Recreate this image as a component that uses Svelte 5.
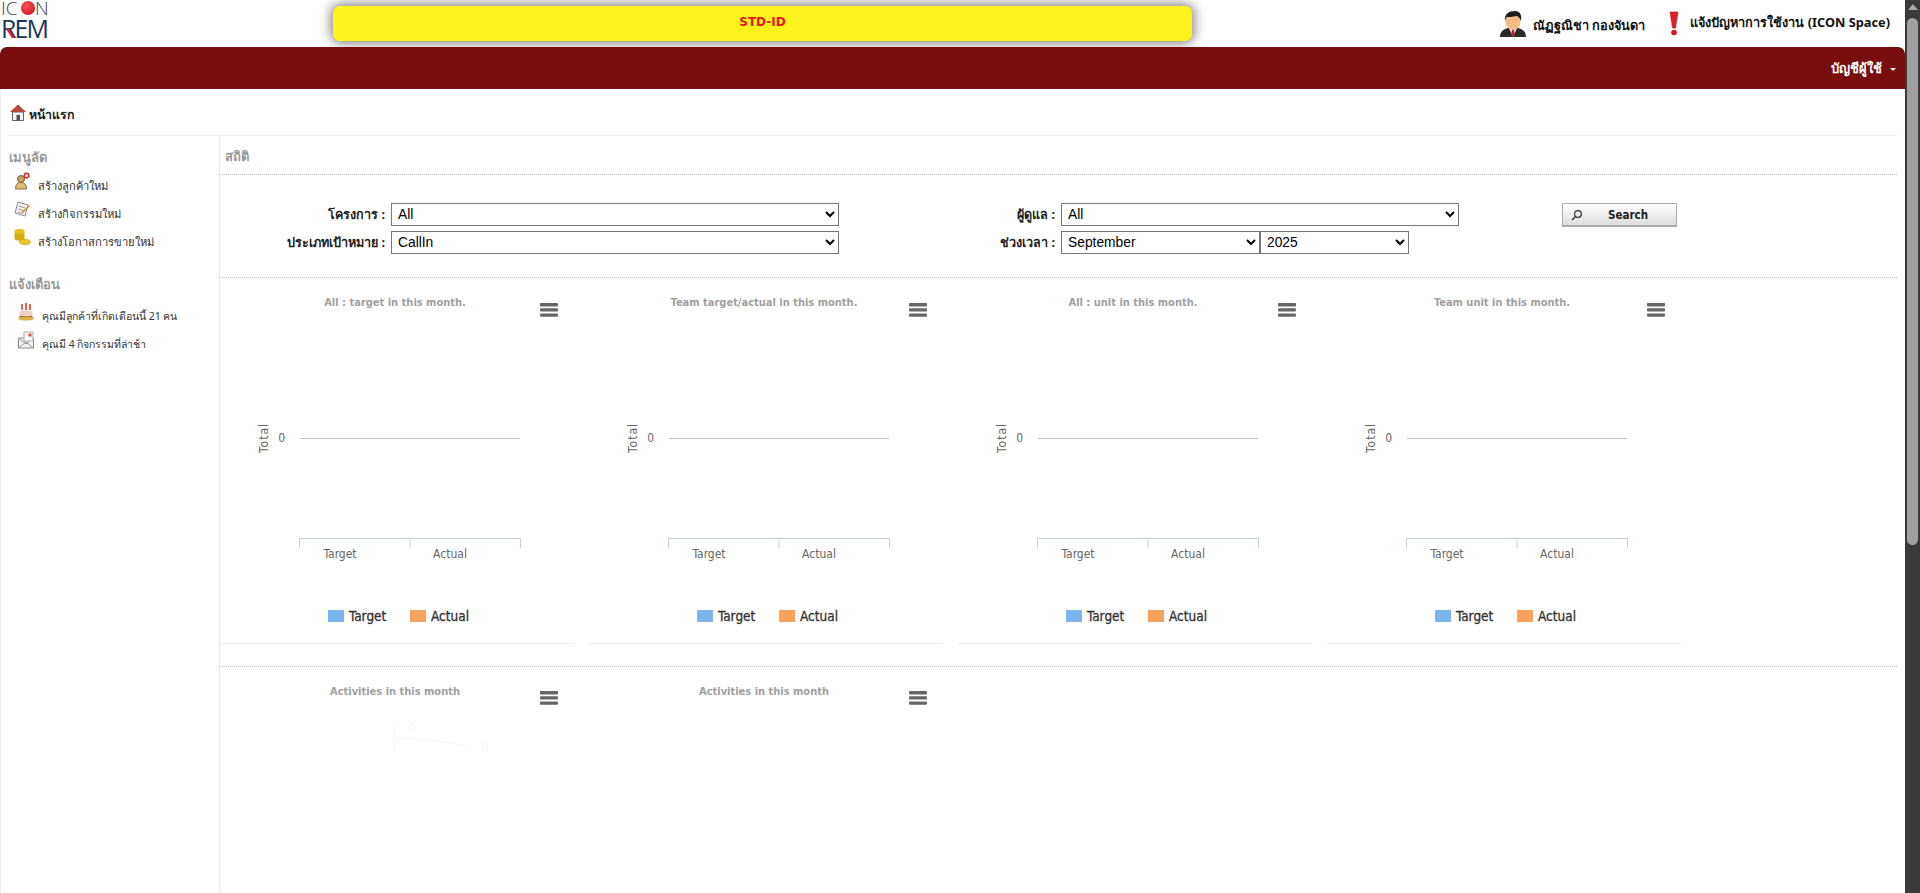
<script>
  // Dashboard mock data
  const menuLinks = [
    { label: "สร้างลูกค้าใหม่", icon: "person" },
    { label: "สร้างกิจกรรมใหม่", icon: "note" },
    { label: "สร้างโอกาสการขายใหม่", icon: "coins" },
  ];
  const alerts = [
    { label: "คุณมีลูกค้าที่เกิดเดือนนี้ 21 คน", icon: "cake" },
    { label: "คุณมี 4 กิจกรรมที่ล่าช้า", icon: "mail" },
  ];
  const charts = [
    "All : target in this month.",
    "Team target/actual in this month.",
    "All : unit in this month.",
    "Team unit in this month.",
  ];
  const months = ["August", "September", "October"];
</script>

{#snippet burger()}
  <svg class="burger" width="18" height="14" viewBox="0 0 18 14">
    <rect y="0" width="18" height="3.4" rx="1" fill="#666" />
    <rect y="5.2" width="18" height="3.4" rx="1" fill="#666" />
    <rect y="10.4" width="18" height="3.4" rx="1" fill="#666" />
  </svg>
{/snippet}

{#snippet sideIcon(name)}
  <svg class="side-icon" width="20" height="20" viewBox="0 0 20 20">
    {#if name === "person"}
      <circle cx="7" cy="7" r="3.500" fill="#c9a063" stroke="#7a5c33" />
      <path d="M1.500 17c0-5 2.500-6.500 5.500-6.500s5.500 1.500 5.500 6.500z" fill="#e0b878" stroke="#8b6a3c" />
      <circle cx="12.500" cy="3.500" r="2.300" fill="#fff" stroke="#d22" stroke-width="1.500" />
    {:else if name === "note"}
      <path d="M4 2l10 3-3 11-10-3z" fill="#f4f4f4" stroke="#888" />
      <path d="M5 6l6 2M4.400 9l6 2M4 12l4 1.200" stroke="#999" />
      <path d="M16 6l-7 7-1.500 1 .5-2 7-7z" fill="#e08a2c" />
    {:else if name === "coins"}
      <ellipse cx="5.500" cy="3.500" rx="5" ry="2.400" fill="#e6bc1c" />
      <path d="M.5 3.500v7c0 3 10 3 10 0v-7c0 3-10 3-10 0z" fill="#d9a90e" />
      <ellipse cx="11" cy="14" rx="5.500" ry="2.800" fill="#edc62c" stroke="#c89c10" stroke-width=".6" />
    {:else if name === "cake"}
      <path d="M4 2v6M8 1v7M12 2v6" stroke="#e5341c" stroke-width="1.500" />
      <path d="M1.500 10c0-2 13-2 13 0v4h-13z" fill="#f2cfc2" />
      <path d="M1.500 14h13v2c0 2-13 2-13 0z" fill="#9a6a2c" />
      <ellipse cx="8" cy="16.500" rx="8" ry="2" fill="#d9b04c" />
    {:else}
      <path d="M.5 8h15v10H.5z" fill="#f3f3f3" stroke="#8a8a8a" />
      <path d="M.5 18l7.500-6 7.500 6M.5 8l7.500 6 7.500-6" fill="none" stroke="#9a9a9a" />
      <path d="M6 2h9v9H6z" fill="#fff" stroke="#aaa" />
      <rect x="10.500" y="3.500" width="3" height="3" fill="#d8553c" />
    {/if}
  </svg>
{/snippet}

<div class="screen">
  <div class="page">
    <header class="topbar">
      <div class="logo">
        <svg width="50" height="40" viewBox="0 0 50 40">
          <defs>
            <radialGradient id="dot" cx="40%" cy="35%" r="70%">
              <stop offset="0" stop-color="#f25a62" />
              <stop offset="1" stop-color="#d7121f" />
            </radialGradient>
          </defs>
          <text class="logo-icon" x="1" y="15">IC</text>
          <circle cx="28" cy="8" r="7" fill="url(#dot)" />
          <text class="logo-icon" x="35" y="15">N</text>
          <text class="logo-rem" x="1" y="38" textLength="48">REM</text>
          <path d="M6 29l3-.5 6.500 9.500h-3.500z" fill="#d8202c" />
        </svg>
      </div>
      <div class="banner">STD-ID</div>
      <div class="top-right">
        <div class="top-link user">
          <svg width="26" height="27" viewBox="0 0 26 27">
            <path d="M0 27c0-6 4-8 8-9h10c4 1 8 3 8 9z" fill="#2a2a2a" />
            <path d="M9 18h8l-4 9z" fill="#f2f2f2" />
            <path d="M11.500 18.500h3l-.5 1.500.8 4.500-1.800 2.500-1.800-2.500.8-4.500z" fill="#b3202a" />
            <ellipse cx="13" cy="12" rx="7.500" ry="8" fill="#f5bd84" />
            <path d="M5 11C4 4 9 1 15 1c5 0 7 4 6 10-1-3-3-5-5-5-3 1-8 1-9 1-1 1-1.500 2-2 4z" fill="#1d1d1d" />
          </svg>
          <span>ณัฏฐณิชา กองจันดา</span>
        </div>
        <div class="top-link issue">
          <svg width="12" height="25" viewBox="0 0 12 25">
            <path d="M2 1h8l-2.500 16h-3z" fill="#e01f26" stroke="#a81419" stroke-width=".6" />
            <circle cx="6" cy="21.500" r="2.800" fill="#d8181f" />
          </svg>
          <span>แจ้งปัญหาการใช้งาน (ICON Space)</span>
        </div>
      </div>
    </header>

    <nav class="navbar">
      <span>บัญชีผู้ใช้</span>
      <i class="caret"></i>
    </nav>

    <div class="crumb">
      <svg width="16" height="17" viewBox="0 0 16 17">
        <path d="M2.500 8h11v8.500h-11z" fill="#f4f4f4" stroke="#666" />
        <rect x="6.500" y="11" width="3.500" height="5.500" fill="#555" />
        <path d="M8 .5L16 8H0z" fill="#b5493a" />
      </svg>
      <strong>หน้าแรก</strong>
    </div>

    <div class="content">
      <aside class="sidebar">
        <h4>เมนูลัด</h4>
        <ul class="quick">
          {#each menuLinks as link}
            <li>{@render sideIcon(link.icon)}<span>{link.label}</span></li>
          {/each}
        </ul>
        <h4 class="alerts-title">แจ้งเตือน</h4>
        <ul class="alerts">
          {#each alerts as a}
            <li>{@render sideIcon(a.icon)}<span>{a.label}</span></li>
          {/each}
        </ul>
      </aside>

      <main class="main">
        <div class="section-title">สถิติ</div>

        <div class="filters">
          <div class="field-group left">
            <label for="project">โครงการ :</label>
            <select id="project" class="wide"><option>All</option></select>
            <label for="target">ประเภทเป้าหมาย :</label>
            <select id="target" class="wide"><option>CallIn</option></select>
          </div>
          <div class="field-group right">
            <label for="owner">ผู้ดูแล :</label>
            <select id="owner" class="wide"><option>All</option></select>
            <label for="month">ช่วงเวลา :</label>
            <div class="period">
              <select id="month" class="month">
                {#each months as m}
                  <option selected={m === "September"}>{m}</option>
                {/each}
              </select>
              <select class="year"><option>2025</option></select>
            </div>
          </div>
          <button class="search">
            <svg width="12" height="12" viewBox="0 0 12 12">
              <circle cx="7" cy="5" r="3.400" fill="none" stroke="#333" stroke-width="1.200" />
              <path d="M4.500 7.500L1 11" stroke="#333" stroke-width="1.400" />
            </svg>
            <span>Search</span>
          </button>
        </div>

        <div class="chart-row">
          {#each charts as title}
            <section class="chart">
              <div class="chart-head">
                <h5>{title}</h5>
                {@render burger()}
              </div>
              <svg class="plot" width="354" height="284" viewBox="0 0 354 284">
                <text class="axis-title" transform="translate(48 120) rotate(-90)" text-anchor="middle">Total</text>
                <text class="tick" x="65" y="124" text-anchor="end">0</text>
                <line x1="80" x2="300" y1="120.500" y2="120.500" stroke="#c0c0c0" />
                <path d="M79.500 230v-9.500h221v9.500M190 220v10" fill="none" stroke="#c0d0e0" />
                <text class="tick" x="120" y="240" text-anchor="middle">Target</text>
                <text class="tick" x="230" y="240" text-anchor="middle">Actual</text>
              </svg>
              <div class="legend">
                <span class="swatch blue"></span><b>Target</b>
                <span class="swatch orange"></span><b>Actual</b>
              </div>
            </section>
          {/each}
        </div>

        <div class="chart-row second">
          {#each [0, 1] as i}
            <section class="chart activity">
              <div class="chart-head">
                <h5>Activities in this month</h5>
                {@render burger()}
              </div>
              {#if i === 0}
                <svg class="ghost" width="110" height="40" viewBox="0 0 110 40">
                  <path d="M14 4c-2 3-2 5-2 28M14 17c20 0 50 4 72 8" fill="none" stroke="#f9f6f1" />
                  <text x="28" y="10" fill="#f6f6f6" font-size="10">0</text>
                  <text x="100" y="30" fill="#f6f6f6" font-size="10">0</text>
                </svg>
              {/if}
            </section>
          {/each}
        </div>
      </main>
    </div>
  </div>

  <div class="scrollbar">
    <i class="arrow"></i>
    <div class="thumb"></div>
  </div>
</div>

<style>
  :global(body) {
    margin: 0;
    background: #fff;
    overflow: hidden;
  }

  .screen {
    display: flex;
    height: 893px;
    font-family: "Noto Sans", "DejaVu Sans", sans-serif;
    font-size: 13px;
    color: #222;
  }

  .page {
    flex: 1;
    min-width: 0;
    display: flex;
    flex-direction: column;
  }

  .topbar {
    height: 47px;
    display: flex;
    align-items: flex-start;
    flex-shrink: 0;
  }

  .logo {
    width: 333px;
    font-family: "Open Sans", sans-serif;
  }

  .logo svg {
    display: block;
  }

  .logo-icon {
    font-size: 19px;
    font-weight: 300;
    fill: #444;
  }

  .logo-rem {
    font-size: 25px;
    fill: #1c3557;
  }

  .banner {
    width: 859px;
    height: 35px;
    margin-top: 6px;
    background: #fff31e;
    border-radius: 7px;
    box-shadow: 0 0 12px 2px rgba(0, 0, 0, 0.5);
    color: #e8141c;
    font-family: "DejaVu Sans", sans-serif;
    font-weight: bold;
    font-size: 12px;
    text-align: center;
    line-height: 33px;
  }

  .top-right {
    flex: 1;
    display: flex;
    justify-content: flex-end;
    padding-right: 15px;
    gap: 23px;
    font-weight: bold;
    font-size: 12.75px;
    color: #111;
  }

  .top-link {
    display: flex;
    align-items: center;
    gap: 7px;
    height: 27px;
    margin-top: 10px;
  }

  .user span {
    padding-top: 4px;
  }

  .issue {
    gap: 10px;
  }

  .issue span {
    margin-top: -3px;
  }

  .navbar {
    height: 42px;
    flex-shrink: 0;
    background: #780e0e;
    border-radius: 7px 7px 0 0;
    color: #fff;
    font-weight: bold;
    display: flex;
    align-items: center;
    justify-content: flex-end;
    padding-right: 9px;
    gap: 8px;
  }

  .caret {
    border: 3px solid transparent;
    border-top: 3px solid #fff;
    border-bottom: 0;
    margin-top: 2px;
  }

  .crumb {
    height: 46px;
    flex-shrink: 0;
    margin: 0 8px 0 0;
    padding-left: 9px;
    display: flex;
    align-items: center;
    gap: 3px;
    border-left: 1px solid #eee;
    box-sizing: border-box;
  }

  .crumb strong {
    font-size: 12.4px;
    padding-top: 5px;
  }

  .content {
    flex: 1;
    display: flex;
    min-height: 0;
    margin-right: 8px;
    border-left: 1px solid #eee;
    position: relative;
  }

  .sidebar {
    width: 219px;
    flex-shrink: 0;
    box-sizing: border-box;
    border-right: 1px solid #e8e8e8;
    padding-left: 8px;
  }

  .sidebar h4 {
    margin: 0;
    font-size: 13px;
    color: #999;
    font-weight: bold;
    height: 36px;
    line-height: 42px;
    border-top: 1px solid #eee;
  }

  .sidebar h4.alerts-title {
    border-top: 0;
    margin-top: 13px;
    height: 33px;
    line-height: 30px;
  }

  .sidebar ul {
    list-style: none;
    margin: 0;
    padding: 0;
  }

  .quick li {
    height: 28px;
    display: flex;
    align-items: center;
    gap: 4px;
    padding-left: 5px;
    color: #333;
    font-size: 11.2px;
  }

  .alerts li {
    height: 28px;
    display: flex;
    align-items: center;
    gap: 4px;
    padding-left: 9px;
    color: #333;
    font-size: 10.5px;
  }

  .side-icon {
    width: 20px;
    height: 20px;
    margin-top: -8px;
    flex-shrink: 0;
  }

  .main {
    flex: 1;
    min-width: 0;
    overflow: hidden;
  }

  .section-title {
    height: 40px;
    box-sizing: border-box;
    padding-left: 5px;
    line-height: 40px;
    font-size: 13px;
    font-weight: bold;
    color: #999;
    border-top: 1px solid #eee;
    border-bottom: 1px dotted #bbb;
  }

  .filters {
    height: 103px;
    box-sizing: border-box;
    border-bottom: 1px dotted #bbb;
    display: flex;
    padding-top: 28px;
    position: relative;
  }

  .field-group {
    display: grid;
    row-gap: 5px;
    align-content: start;
    align-items: center;
    column-gap: 6px;
  }

  .field-group label {
    text-align: right;
    font-weight: bold;
    font-size: 12.6px;
    color: #222;
  }

  .left {
    grid-template-columns: 165px 448px;
    width: 618px;
  }

  .right {
    grid-template-columns: 217px auto;
    width: 620px;
  }

  select {
    height: 23px;
    padding-left: 2px;
    font-family: "Liberation Sans", sans-serif;
    font-size: 13.8px;
    background: #fff;
    box-sizing: border-box;
  }

  .right .wide {
    width: 398px;
  }

  .period {
    display: flex;
    gap: 0;
  }

  .month {
    width: 199px;
  }

  .year {
    width: 149px;
  }

  .search {
    position: absolute;
    left: 1342px;
    top: 28px;
    width: 115px;
    height: 24px;
    padding: 0;
    box-sizing: border-box;
    border: 1px solid #aaa;
    border-bottom-width: 2px;
    background: linear-gradient(#fff, #ddd);
    display: flex;
    align-items: center;
    font-family: "DejaVu Sans Condensed", "DejaVu Sans", sans-serif;
    font-size: 11.5px;
    font-weight: bold;
    color: #222;
  }

  .search svg {
    margin-left: 8px;
  }

  .search span {
    margin-left: 25px;
  }

  .chart-row {
    display: flex;
    gap: 15px;
    height: 389px;
    box-sizing: border-box;
    border-bottom: 1px dotted #bbb;
  }

  .chart-row.second {
    border-bottom: 0;
    height: auto;
  }

  .chart {
    width: 354px;
    height: 366px;
    box-sizing: border-box;
    border-bottom: 1px solid #eee;
    position: relative;
  }

  .activity {
    border-bottom: 0;
    height: 226px;
  }

  .activity .burger {
    top: 24px;
  }

  .chart-head {
    height: 40px;
    position: relative;
  }

  .chart-head h5 {
    margin: 0;
    padding-top: 18px;
    width: 350px;
    text-align: center;
    font-family: "DejaVu Sans Condensed", "DejaVu Sans", sans-serif;
    font-size: 11px;
    font-weight: bold;
    color: #a0a0a0;
  }

  .burger {
    position: absolute;
    right: 16px;
    top: 25px;
  }

  .plot {
    display: block;
  }

  .axis-title,
  .tick {
    font-family: "DejaVu Sans Condensed", "DejaVu Sans", sans-serif;
    font-size: 12px;
    fill: #666;
  }

  .axis-title {
    letter-spacing: 1px;
  }

  .legend {
    position: absolute;
    left: 108px;
    top: 330px;
    display: flex;
    align-items: center;
    font-family: "DejaVu Sans Condensed", "DejaVu Sans", sans-serif;
    font-size: 13.5px;
    color: #333;
  }

  .legend b {
    font-weight: normal;
    -webkit-text-stroke: 0.3px #333;
    width: 61px;
  }

  .swatch {
    width: 16px;
    height: 12px;
    margin-right: 5px;
  }

  .blue {
    background: #7cb5ec;
  }

  .orange {
    background: #f7a35c;
  }

  .ghost {
    position: absolute;
    left: 162px;
    top: 54px;
  }

  .scrollbar {
    width: 15px;
    flex-shrink: 0;
    background: #3a3a3a;
    position: relative;
  }

  .arrow {
    display: block;
    margin: 4px auto 0;
    width: 0;
    border: 5px solid transparent;
    border-bottom: 6px solid #a8a8a8;
    border-top: 0;
  }

  .thumb {
    position: absolute;
    left: 2px;
    right: 2px;
    top: 18px;
    height: 527px;
    border-radius: 6px;
    background: #a0a0a0;
  }
</style>
